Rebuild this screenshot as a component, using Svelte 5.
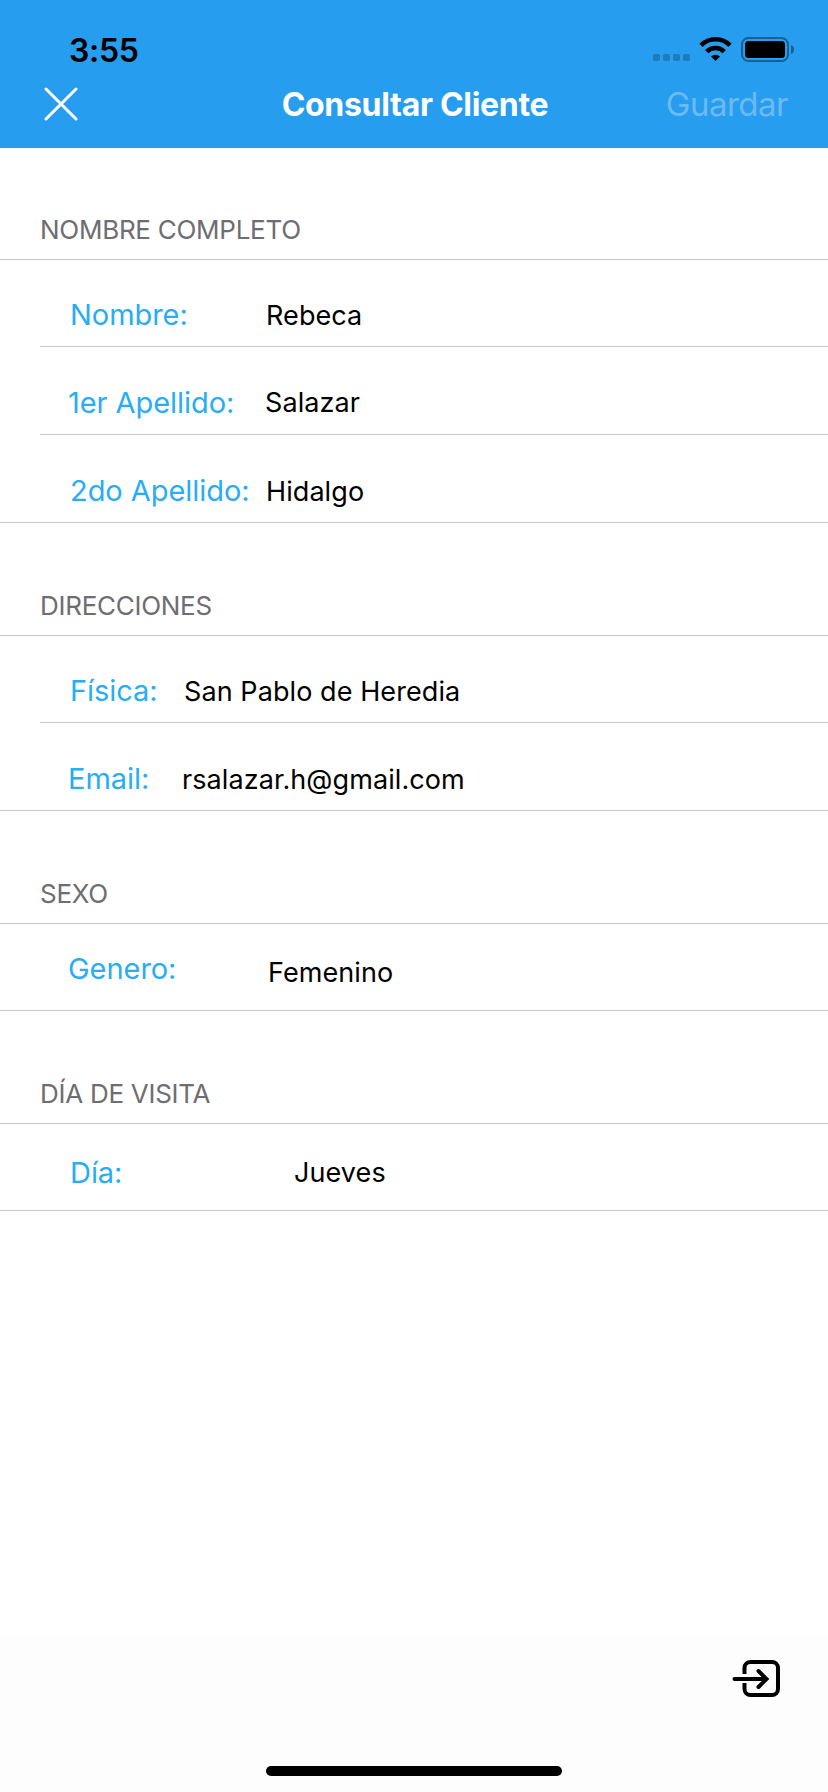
<script lang="ts">
  type Field = {
    label: string;
    value: string;
    labelX: number;
    valueX: number;
    labelTop: number;
    valueTop: number;
  };

  const sections: { title: string; fields: Field[] }[] = [
    {
      title: "NOMBRE COMPLETO",
      fields: [
        { label: "Nombre:", value: "Rebeca", labelX: 70, valueX: 266, labelTop: 37, valueTop: 38 },
        { label: "1er Apellido:", value: "Salazar", labelX: 68, valueX: 265, labelTop: 38, valueTop: 38 },
        { label: "2do Apellido:", value: "Hidalgo", labelX: 70, valueX: 266, labelTop: 38, valueTop: 39 },
      ],
    },
    {
      title: "DIRECCIONES",
      fields: [
        { label: "Física:", value: "San Pablo de Heredia", labelX: 70, valueX: 184, labelTop: 37, valueTop: 38 },
        { label: "Email:", value: "rsalazar.h@gmail.com", labelX: 68, valueX: 182, labelTop: 38, valueTop: 39 },
      ],
    },
    {
      title: "SEXO",
      fields: [{ label: "Genero:", value: "Femenino", labelX: 68, valueX: 268, labelTop: 27, valueTop: 31 }],
    },
    {
      title: "DÍA DE VISITA",
      fields: [{ label: "Día:", value: "Jueves", labelX: 70, valueX: 294, labelTop: 31, valueTop: 31 }],
    },
  ];
</script>

<div class="screen">
  <header>
    <div class="status-bar">
      <span class="time">3:55</span>
      <svg class="status-icons" width="142" height="28" viewBox="0 0 142 28" aria-hidden="true">
        <g fill="#1d7cbc">
          <rect x="0" y="18" width="7" height="7" rx="1.8" />
          <rect x="10" y="18" width="7" height="7" rx="1.8" />
          <rect x="20" y="18" width="7" height="7" rx="1.8" />
          <rect x="30" y="18" width="7" height="7" rx="1.8" />
        </g>
        <g fill="none" stroke="#000" stroke-width="4.6">
          <path d="M48 9.300a20.500 20.500 0 0 1 29 0" />
          <path d="M53.700 15.600a12.500 12.500 0 0 1 17.600 0" />
        </g>
        <path d="M58 20.500a6.600 6.600 0 0 1 9 0L62.500 25z" />
        <rect x="89" y="2" width="46" height="23" rx="6.5" fill="none" stroke="#185f92" stroke-width="2" />
        <rect x="92" y="5" width="40" height="17" rx="3.5" />
        <path d="M138 9c4 1.400 4 7.600 0 9z" fill="#185f92" />
      </svg>
    </div>
    <div class="nav-bar">
      <button class="close" aria-label="Cerrar">
        <svg width="34" height="34" viewBox="0 0 34 34">
          <path d="M2 2l30 30M32 2L2 32" fill="none" stroke="#fff" stroke-width="3" stroke-linecap="round" />
        </svg>
      </button>
      <h1>Consultar Cliente</h1>
      <button class="save" disabled>Guardar</button>
    </div>
  </header>

  <main>
    {#each sections as section}
      <section>
        <h2>{section.title}</h2>
        {#each section.fields as field}
          <div class="field">
            <span
              class="label"
              style="margin-top: {field.labelTop}px; margin-left: {field.labelX - 40}px; width: {field.valueX - field.labelX}px"
            >{field.label}</span>
            <span class="value" style="margin-top: {field.valueTop}px">{field.value}</span>
          </div>
        {/each}
      </section>
    {/each}
  </main>

  <footer>
    <button class="exit" aria-label="Salir">
      <svg width="50" height="42" viewBox="0 0 50 42" fill="none" stroke="#000" stroke-width="4">
        <path d="M12.500 16V10a6 6 0 0 1 6-6H40a6 6 0 0 1 6 6V31a6 6 0 0 1-6 6H18.500a6 6 0 0 1-6-6V25" />
        <path d="M2.500 21H34.500M26.500 13l8 8-8 8" stroke-linecap="round" />
      </svg>
    </button>
    <div class="home-indicator"></div>
  </footer>
</div>

<style>
  :global(body) { margin: 0; background: #fff; }
  .screen { display: flex; flex-direction: column; width: 828px; height: 1792px; overflow: hidden; background: #fff; color: #000; font-family: Inter, "Liberation Sans", sans-serif; }
  button { padding: 0; border: 0; background: none; font: inherit; }
  svg { display: block; }
  header { height: 148px; background: #269dee; }
  .status-bar { display: flex; justify-content: space-between; height: 72px; padding: 0 33px 0 69px; }
  .time { margin-top: 31px; font-size: 32px; font-weight: 600; line-height: 40px; letter-spacing: -.3px; }
  .status-icons { margin-top: 36px; }
  .nav-bar { display: grid; grid-template-columns: 1fr auto 1fr; align-items: center; height: 64px; padding: 0 40px 0 42px; color: #fff; }
  .close { justify-self: start; margin-left: 2px; }
  h1 { margin: 2px 0 0; font-size: 32px; font-weight: 650; line-height: 40px; letter-spacing: -.3px; }
  .save { justify-self: end; color: #6dbaf2; font-size: 33px; line-height: 40px; letter-spacing: -.5px; }
  main { flex: 1; }
  h2 { box-sizing: border-box; height: 113px; margin: 0; padding: 67px 0 0 40px; border-bottom: 1px solid #c8c8ca; color: #6d6d72; font-size: 26px; font-weight: 400; line-height: 32px; letter-spacing: -.27px; }
  section:first-child h2 { height: 112px; padding-top: 66px; }
  .field { display: flex; box-sizing: border-box; height: 88px; margin-left: 40px; border-bottom: 1px solid #c8c8ca; line-height: 36px; white-space: nowrap; }
  h2 + .field { height: 87px; }
  .field:last-child { margin-left: 0; padding-left: 40px; }
  .label { flex: none; color: #28adf5; font-size: 29px; letter-spacing: -.05px; }
  .value { font-size: 27px; letter-spacing: .08px; }
  footer { display: flex; flex-direction: column; box-sizing: border-box; height: 156px; padding: 22px 46px 16px; background: #fdfdfd; }
  .exit { align-self: flex-end; }
  .home-indicator { width: 296px; height: 10px; margin: auto auto 0; border-radius: 5px; background: #000; }
</style>
